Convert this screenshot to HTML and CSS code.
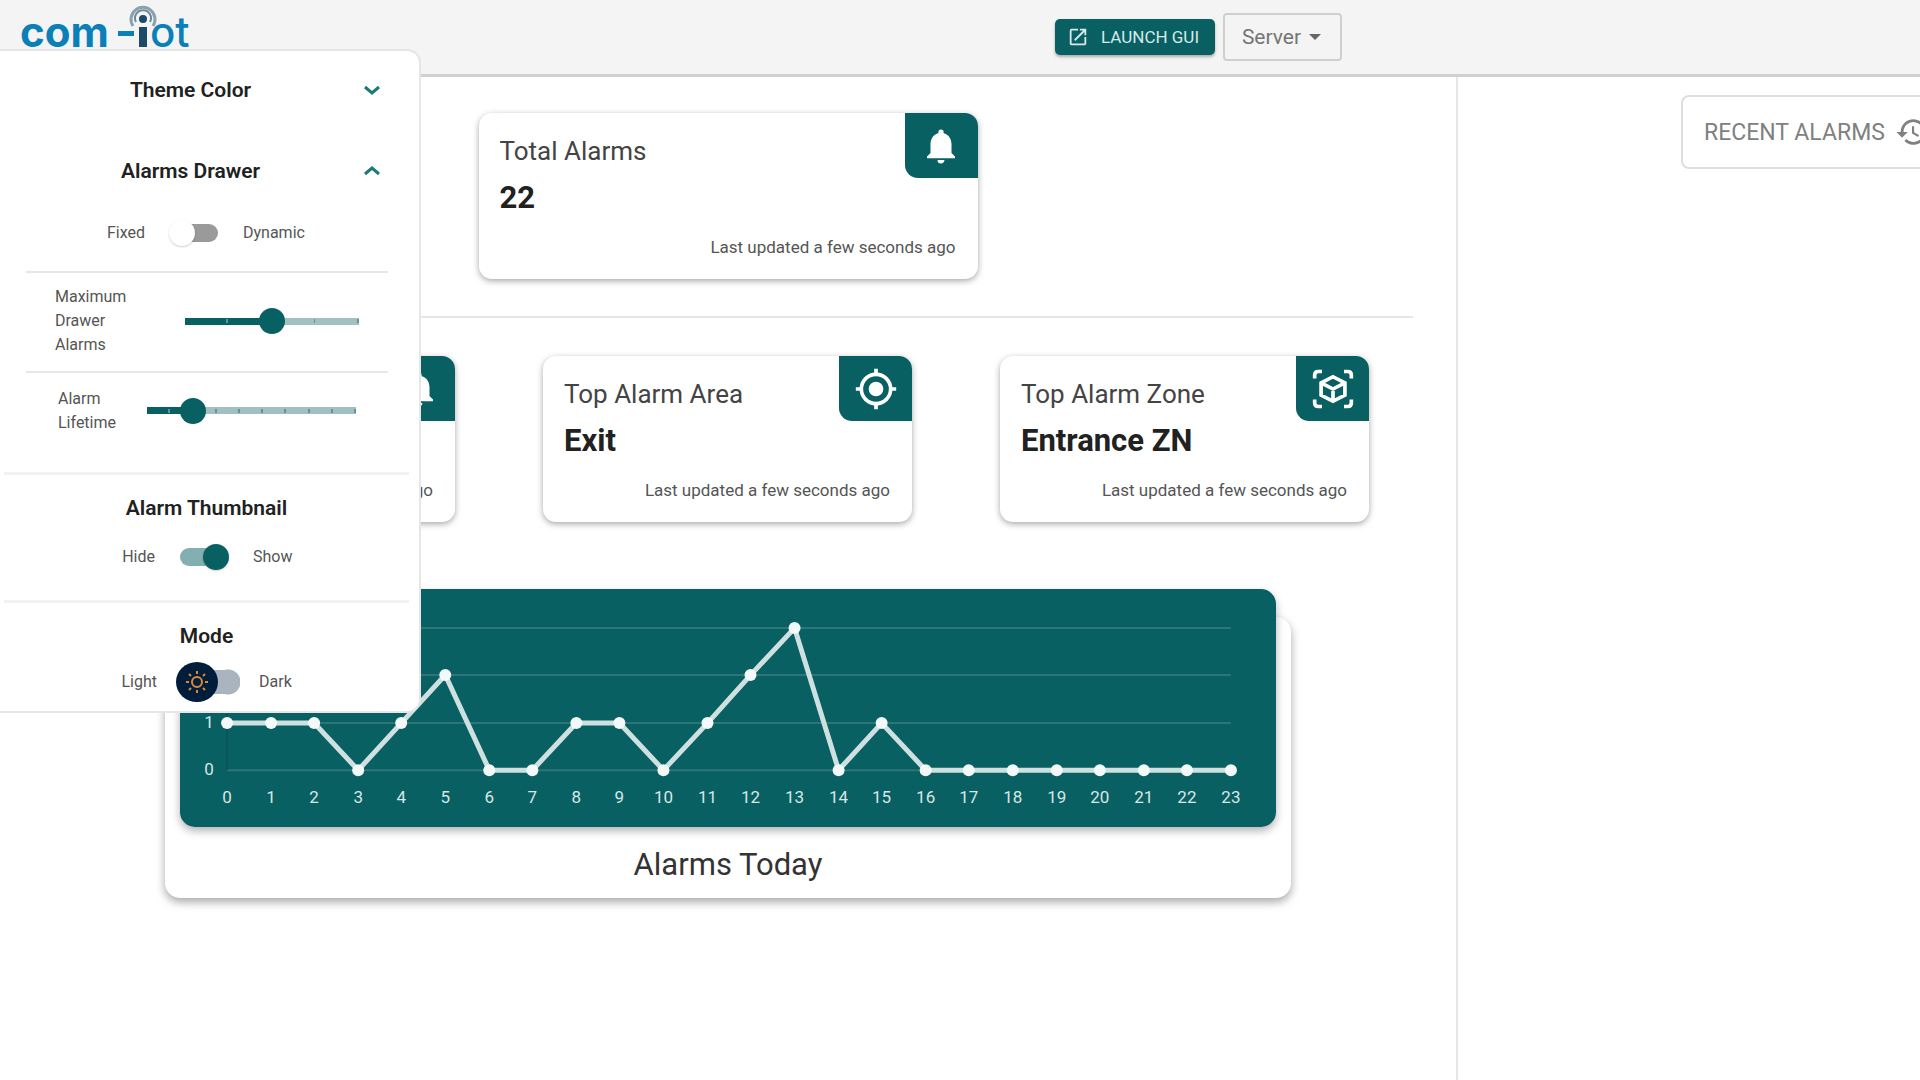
FILE: index.html
```html
<!DOCTYPE html>
<html lang="en">
<head>
<meta charset="utf-8">
<title>com-iot</title>
<link rel="stylesheet" href="styles.css">
</head>
<body>
<header class="topbar">
  <a class="logo" href="#" aria-label="com-iot">
    <svg width="180" height="60" viewBox="0 0 180 60">
      <text class="logo-bold" x="-1" y="47">com</text>
      <rect x="97" y="31" width="16" height="5" fill="#0a7fb8"/>
      <g fill="none" stroke="#8ba1b0" stroke-width="3">
        <path d="M112 26a12 12 0 1 1 20 0"/>
        <path d="M115 22a8 8 0 1 1 14 0" stroke="#6f8a9d" stroke-width="2"/>
      </g>
      <circle cx="122" cy="19" r="4" fill="#1c4a68"/>
      <rect x="118" y="27" width="8" height="20" fill="#1c4a68"/>
      <text class="logo-thin" x="129" y="47">ot</text>
    </svg>
  </a>
  <div class="actions">
    <button class="launch" type="button">
      <svg width="22" height="22" viewBox="0 0 24 24" fill="currentColor"><path d="M19 19H5V5h7V3H5a2 2 0 0 0-2 2v14a2 2 0 0 0 2 2h14c1.100 0 2-.9 2-2v-7h-2v7zM14 3v2h3.590l-9.830 9.830 1.410 1.410L19 6.410V10h2V3h-7z"/></svg>
      LAUNCH GUI
    </button>
    <button class="server" type="button">Server <span class="caret"></span></button>
  </div>
</header>

<aside class="drawer">
  <div class="section-row">
    <h2>Theme Color</h2>
    <button class="chevron" type="button" aria-label="Expand theme color"><svg width="18" height="12" viewBox="0 0 18 12"><path d="M2 3l7 6 7-6"/></svg></button>
  </div>
  <div class="section-row">
    <h2>Alarms Drawer</h2>
    <button class="chevron" type="button" aria-label="Collapse alarms drawer"><svg width="18" height="12" viewBox="0 0 18 12"><path d="M2 9l7-6 7 6"/></svg></button>
  </div>
  <div class="switch-row switch-row-drawer">
    <span class="side-left">Fixed</span>
    <input class="switch" type="checkbox" aria-label="Dynamic drawer">
    <span>Dynamic</span>
  </div>
  <div class="slider-row slider-row-max">
    <label for="max-alarms">Maximum Drawer Alarms</label>
    <input id="max-alarms" class="slider slider-max" type="range" min="0" max="4" value="2">
  </div>
  <div class="slider-row slider-row-life">
    <label for="lifetime">Alarm Lifetime</label>
    <input id="lifetime" class="slider slider-life" type="range" min="0" max="9" value="2">
  </div>
  <section class="group group-thumb">
    <h2>Alarm Thumbnail</h2>
    <div class="switch-row">
      <span class="side-left">Hide</span>
      <input class="switch" type="checkbox" checked aria-label="Show thumbnail">
      <span>Show</span>
    </div>
  </section>
  <section class="group">
    <h2>Mode</h2>
    <div class="switch-row switch-row-mode">
      <span class="side-left">Light</span>
      <span class="mode">
        <input class="mode-switch" type="checkbox" aria-label="Dark mode">
        <svg class="sun" width="24" height="24" viewBox="0 0 24 24" fill="none" stroke="#d98a35" stroke-width="2"><circle cx="12" cy="12" r="5"/><path d="M12 1v3M12 20v3M1 12h3M20 12h3M4 4l2 2M18 18l2 2M4 20l2-2M18 6l2-2"/></svg>
      </span>
      <span>Dark</span>
    </div>
  </section>
</aside>

<div class="page">
  <main class="content">
    <section class="summary">
      <article class="card card-total">
        <span class="badge"><svg width="42" height="42" viewBox="0 0 24 24" fill="currentColor"><path d="M12 22c1.100 0 2-.9 2-2h-4a2 2 0 0 0 2 2zm6-6v-5c0-3.070-1.640-5.640-4.500-6.320V4a1.500 1.500 0 0 0-3 0v.68C7.630 5.360 6 7.920 6 11v5l-2 2v1h16v-1l-2-2z"/></svg></span>
        <h3>Total Alarms</h3>
        <strong>22</strong>
        <p>Last updated a few seconds ago</p>
      </article>
    </section>
    <section class="cards">
      <article class="card">
        <span class="badge"><svg width="42" height="42" viewBox="0 0 24 24" fill="currentColor"><path d="M12 22c1.100 0 2-.9 2-2h-4a2 2 0 0 0 2 2zm6-6v-5c0-3.070-1.640-5.640-4.500-6.320V4a1.500 1.500 0 0 0-3 0v.68C7.630 5.360 6 7.920 6 11v5l-2 2v1h16v-1l-2-2z"/></svg></span>
        <p>Last updated a few seconds ago</p>
      </article>
      <article class="card">
        <span class="badge"><svg width="44" height="44" viewBox="0 0 24 24" fill="currentColor"><path d="M12 8a4 4 0 1 0 0 8 4 4 0 0 0 0-8zm8.940 3A8.990 8.990 0 0 0 13 3.060V1h-2v2.060A8.990 8.990 0 0 0 3.060 11H1v2h2.060A8.990 8.990 0 0 0 11 20.940V23h2v-2.060A8.990 8.990 0 0 0 20.940 13H23v-2h-2.060zM12 19a7 7 0 1 1 0-14 7 7 0 0 1 0 14z"/></svg></span>
        <h3>Top Alarm Area</h3>
        <strong>Exit</strong>
        <p>Last updated a few seconds ago</p>
      </article>
      <article class="card">
        <span class="badge"><svg width="44" height="42" viewBox="0 0 24 24" preserveAspectRatio="none" fill="none" stroke="currentColor" stroke-width="2"><path d="M2 6V4q0-2 2-2h2M18 2h2q2 0 2 2v2M22 18v2q0 2-2 2h-2M6 22H4q-2 0-2-2v-2M12 5l6.500 3.500v7L12 19l-6.500-3.500v-7zM5.500 8.500L12 12l6.500-3.500M12 12v7"/></svg></span>
        <h3>Top Alarm Zone</h3>
        <strong>Entrance ZN</strong>
        <p>Last updated a few seconds ago</p>
      </article>
    </section>
    <section class="chart-card">
      <div class="chart-panel">
        <svg class="chart" viewBox="0 0 1095 238" role="img" aria-label="Alarms per hour">
          <path class="grid" d="M47 39H1050M47 86H1050M47 134H1050M47 181H1050"/>
          <path class="axis" d="M47 39V181"/>
          <g id="series"></g>
        </svg>
      </div>
      <h2>Alarms Today</h2>
    </section>
  </main>
  <aside class="recent">
    <button class="recent-button" type="button">RECENT ALARMS
      <svg width="34" height="34" viewBox="0 0 24 24" fill="currentColor"><path d="M13 3a9 9 0 0 0-9 9H1l3.890 3.890.07.14L9 12H6a7 7 0 1 1 2.060 4.940l-1.420 1.420A9 9 0 1 0 13 3zm-1 5v5l4.280 2.540.72-1.210-3.500-2.080V8H12z"/></svg>
    </button>
  </aside>
</div>
<script src="chart.js"></script>
</body>
</html>
```
FILE: styles.css
```css
* { box-sizing: border-box; }
:root { --teal: #086063; --line: #e6e6e6; }
body {
  margin: 0;
  min-height: 100vh;
  display: flex;
  flex-direction: column;
  position: relative;
  overflow-x: hidden;
  background: #fff;
  color: #212121;
  font-family: Roboto, "Liberation Sans", sans-serif;
}
button { font: inherit; cursor: pointer; }
h2, h3, p { margin: 0; }

/* Top bar */
.topbar {
  display: flex;
  justify-content: space-between;
  height: 77px;
  padding: 0 calc(30% + 2px) 0 21px;
  background: #f4f4f4;
  border-bottom: 3px solid #d0d0d0;
}
.logo svg { display: block; }
.logo-bold { font: 700 42px Inter, sans-serif; fill: #0a7fb8; }
.logo-thin { font: 500 42px Inter, sans-serif; fill: #0a7fb8; }
.actions { display: flex; align-items: center; gap: 8px; }
.launch {
  display: flex;
  align-items: center;
  justify-content: center;
  gap: 12px;
  width: 160px;
  height: 36px;
  padding: 0 4px 0 0;
  border: 0;
  border-radius: 5px;
  background: var(--teal);
  color: #d7e8e8;
  font-size: 17px;
  white-space: nowrap;
  box-shadow: 0 2px 3px rgba(0, 0, 0, .3);
}
.server {
  display: flex;
  align-items: center;
  justify-content: center;
  gap: 8px;
  width: 119px;
  height: 48px;
  padding: 0 2px 0 0;
  border: 2px solid #cfcfcf;
  border-radius: 4px;
  background: transparent;
  color: #757575;
  font-size: 21px;
}
.caret { border: 6px solid transparent; border-top-color: #666; border-bottom: 0; }

/* Settings drawer */
.drawer {
  position: absolute;
  z-index: 2;
  top: 49px;
  left: 0;
  width: 421px;
  padding-bottom: 9px;
  border: 2px solid var(--line);
  border-left: 0;
  border-radius: 0 14px 14px 0;
  background: #fff;
}
.drawer h2 { font-size: 21px; line-height: 24px; font-weight: 600; text-align: center; }
.section-row {
  display: grid;
  grid-template-columns: 1fr 24px;
  align-items: center;
  height: 81px;
  padding: 0 35px 4px 21px;
}
.chevron { display: flex; justify-content: center; padding: 0; border: 0; background: none; }
.chevron path { fill: none; stroke: #1d7b75; stroke-width: 3; }
.switch-row {
  display: grid;
  grid-template-columns: 151px 98px 1fr;
  align-items: center;
  font-size: 16px;
  line-height: 24px;
  color: #555;
}
.side-left { text-align: right; }
.switch-row-drawer {
  grid-template-columns: 145px 98px 1fr;
  height: 58px;
  padding-bottom: 18px;
}
.switch-row-mode { grid-template-columns: 153px 102px 1fr; }
.switch {
  appearance: none;
  justify-self: center;
  display: grid;
  align-items: center;
  width: 50px;
  height: 26px;
  margin: 0;
}
.switch::before, .switch::after { content: ""; grid-area: 1 / 1; }
.switch::before {
  height: 18px;
  margin: 0 1px;
  border-radius: 9px;
  background: #9a9a9a;
}
.switch::after {
  width: 26px;
  height: 26px;
  border-radius: 50%;
  background: #fff;
  box-shadow: 0 1px 2px rgba(0, 0, 0, .2);
}
.switch:checked::before { background: #84afb1; }
.switch:checked::after { justify-self: end; background: var(--teal); }

.slider-row {
  display: grid;
  align-items: center;
  margin: 0 31px 0 26px;
  border-top: 2px solid var(--line);
  font-size: 16px;
  line-height: 24px;
  color: #555;
}
.slider-row-max { grid-template-columns: 90px 1fr; gap: 27px; height: 100px; padding: 0 16px 2px 29px; }
.slider-row-life { grid-template-columns: 76px 1fr; height: 101px; padding: 0 19px 24px 32px; }
.slider {
  --steps: 4;
  --fill: 50%;
  appearance: none;
  width: 100%;
  height: 26px;
  margin: 0;
  background:
    repeating-linear-gradient(90deg, transparent 0 calc(100% / var(--steps) - 2px), #5f9799 0 calc(100% / var(--steps))) center / calc(100% - 26px) 4px no-repeat,
    linear-gradient(90deg, var(--teal) var(--fill), #a0c0c1 0) center / calc(100% - 26px) 7px no-repeat;
}
.slider-life { --steps: 9; --fill: 22%; }
.slider::-webkit-slider-thumb {
  appearance: none;
  width: 26px;
  height: 26px;
  border-radius: 50%;
  background: var(--teal);
}
.group { margin: 0 10px 0 4px; padding-top: 21px; border-top: 3px solid #f2f2f2; }
.group .switch-row { margin-top: 24px; }
.group-thumb { height: 128px; }
.group .switch-row-mode { margin-top: 14px; }
.mode { display: grid; justify-self: center; width: 64px; }
.mode-switch, .sun { grid-area: 1 / 1; }
.mode-switch {
  appearance: none;
  width: 64px;
  height: 40px;
  margin: 0;
  background: linear-gradient(#aab4be, #aab4be) 20px center / 32px 24px no-repeat,
    radial-gradient(circle at 52px 20px, #aab4be 12px, transparent 13px);
}
.mode-switch::before {
  content: "";
  display: block;
  width: 42px;
  height: 40px;
  border-radius: 50%;
  background: #001e3c;
}
.sun { align-self: center; margin-left: 9px; z-index: 1; pointer-events: none; }

/* Page */
.page { flex: 1; display: grid; grid-template-columns: 91fr 29fr; }
.content { display: flex; flex-direction: column; min-width: 0; }
.summary {
  display: flex;
  justify-content: center;
  margin: 0 43px;
  padding: 36px 0 37px;
  border-bottom: 2px solid var(--line);
}
.card {
  position: relative;
  display: flex;
  flex-direction: column;
  height: 166px;
  padding: 23px 22px 20px 21px;
  border-radius: 13px;
  background: #fff;
  box-shadow: 0 2px 6px rgba(0, 0, 0, .35);
}
.card-total { width: 499px; }
.card h3 { font-size: 26px; line-height: 30px; font-weight: 400; color: #444; }
.card strong { margin-top: 16px; font-size: 31px; line-height: 32px; font-weight: 700; }
.card p { margin-top: auto; font-size: 17px; line-height: 24px; text-align: right; color: #555; }
.badge {
  position: absolute;
  top: 0;
  right: 0;
  display: grid;
  place-items: center;
  width: 73px;
  height: 65px;
  border-radius: 0 13px;
  background: var(--teal);
  color: #fff;
}
.cards {
  display: grid;
  grid-template-columns: repeat(3, 1fr);
  gap: 88px;
  padding: 38px 87px 0 86px;
}
.chart-card {
  margin: 95px 165px 0;
  padding: 0 15px 15px;
  border-radius: 15px;
  background: #fff;
  box-shadow: 0 4px 10px rgba(0, 0, 0, .35);
}
.chart-panel {
  margin-top: -28px;
  border-radius: 15px;
  background: var(--teal);
  box-shadow: 0 4px 8px rgba(0, 0, 0, .3);
}
.chart { display: block; width: 100%; }
.chart .grid { stroke: #2d7577; stroke-width: 2; }
.chart .axis { stroke: #08575a; stroke-width: 2; }
.chart text { fill: #d7e6e6; font-size: 17px; text-anchor: middle; }
.chart polyline { fill: none; stroke: #cfe0e0; stroke-width: 5; }
.chart circle { fill: #f3f8f8; }
.chart-card h2 { margin-top: 20px; font-size: 31px; line-height: 36px; font-weight: 400; text-align: center; color: #333; }

/* Recent alarms */
.recent {
  overflow: hidden;
  padding: 18px 0 0 223px;
  border-left: 2px solid var(--line);
}
.recent-button {
  display: flex;
  align-items: center;
  gap: 10px;
  width: 280px;
  height: 74px;
  padding: 0 21px;
  border: 2px solid #dedede;
  border-radius: 8px;
  background: #fff;
  color: #808080;
  font-size: 23px;
  white-space: nowrap;
}
.recent-button svg { flex: none; }
```
FILE: chart.js
```javascript
const values = [1, 1, 1, 0, 1, 2, 0, 0, 1, 1, 0, 1, 2, 3, 0, 1, 0, 0, 0, 0, 0, 0, 0, 0];
const x = i => Math.round(47 + i * 1003 / 23);
const y = v => Math.round(181 - v * 142 / 3);
const points = values.map((v, i) => `${x(i)},${y(v)}`).join(" ");
const dots = values.map((v, i) => `<circle cx="${x(i)}" cy="${y(v)}" r="6"/>`).join("");
const hours = values.map((v, i) => `<text x="${x(i)}" y="214">${i}</text>`).join("");
const levels = [0, 1].map(v => `<text x="29" y="${y(v) + 5}">${v}</text>`).join("");
document.getElementById("series").innerHTML = `<polyline points="${points}"/>${dots}${hours}${levels}`;
```
